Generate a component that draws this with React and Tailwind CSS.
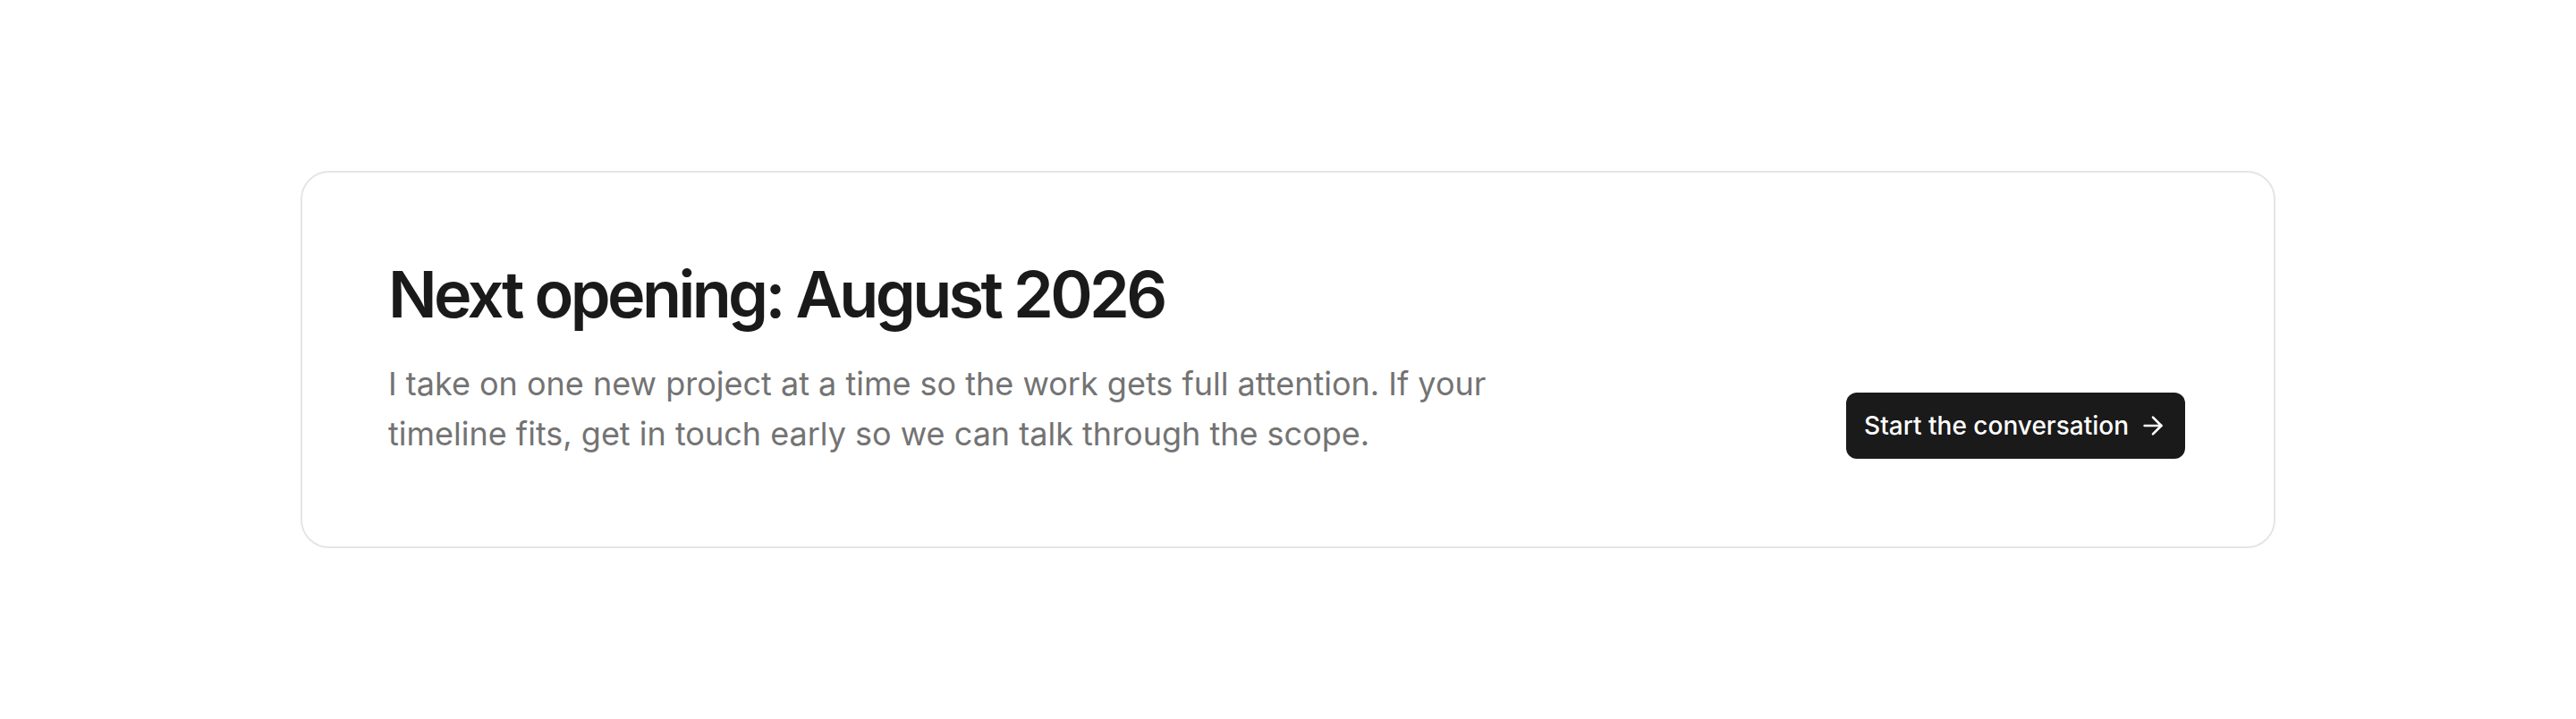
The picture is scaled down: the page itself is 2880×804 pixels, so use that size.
import { ArrowRight } from 'lucide-react';

export default function App() {
  return (
    <div
      className="min-h-screen flex items-center justify-center bg-white px-[336px]"
      style={{ fontFamily: 'Inter, "Noto Sans", sans-serif' }}
    >
      <section className="w-full max-w-[2208px] border-2 border-[#e5e5e5] rounded-[32px] pl-[96px] pr-[99px] pt-[96px] pb-[98px] flex items-end justify-between gap-16">
        <div className="max-w-[1280px]">
          <h2 className="text-[72px] leading-[1.1] font-semibold tracking-tighter text-[#1a1a1a]">
            Next opening: August 2026
          </h2>
          <p className="mt-8 text-[36px] leading-[56px] text-[#737373]">
            I take on one new project at a time so the work gets full attention. If your
            timeline fits, get in touch early so we can talk through the scope.
          </p>
        </div>
        <a
          href="#contact"
          className="shrink-0 flex items-center gap-[11px] h-[74px] pl-[20px] pr-[20px] rounded-[12px] bg-[#1a1a1a] text-white text-[28px] font-medium"
        >
          Start the conversation
          <ArrowRight size={32} strokeWidth={2} />
        </a>
      </section>
    </div>
  );
}
